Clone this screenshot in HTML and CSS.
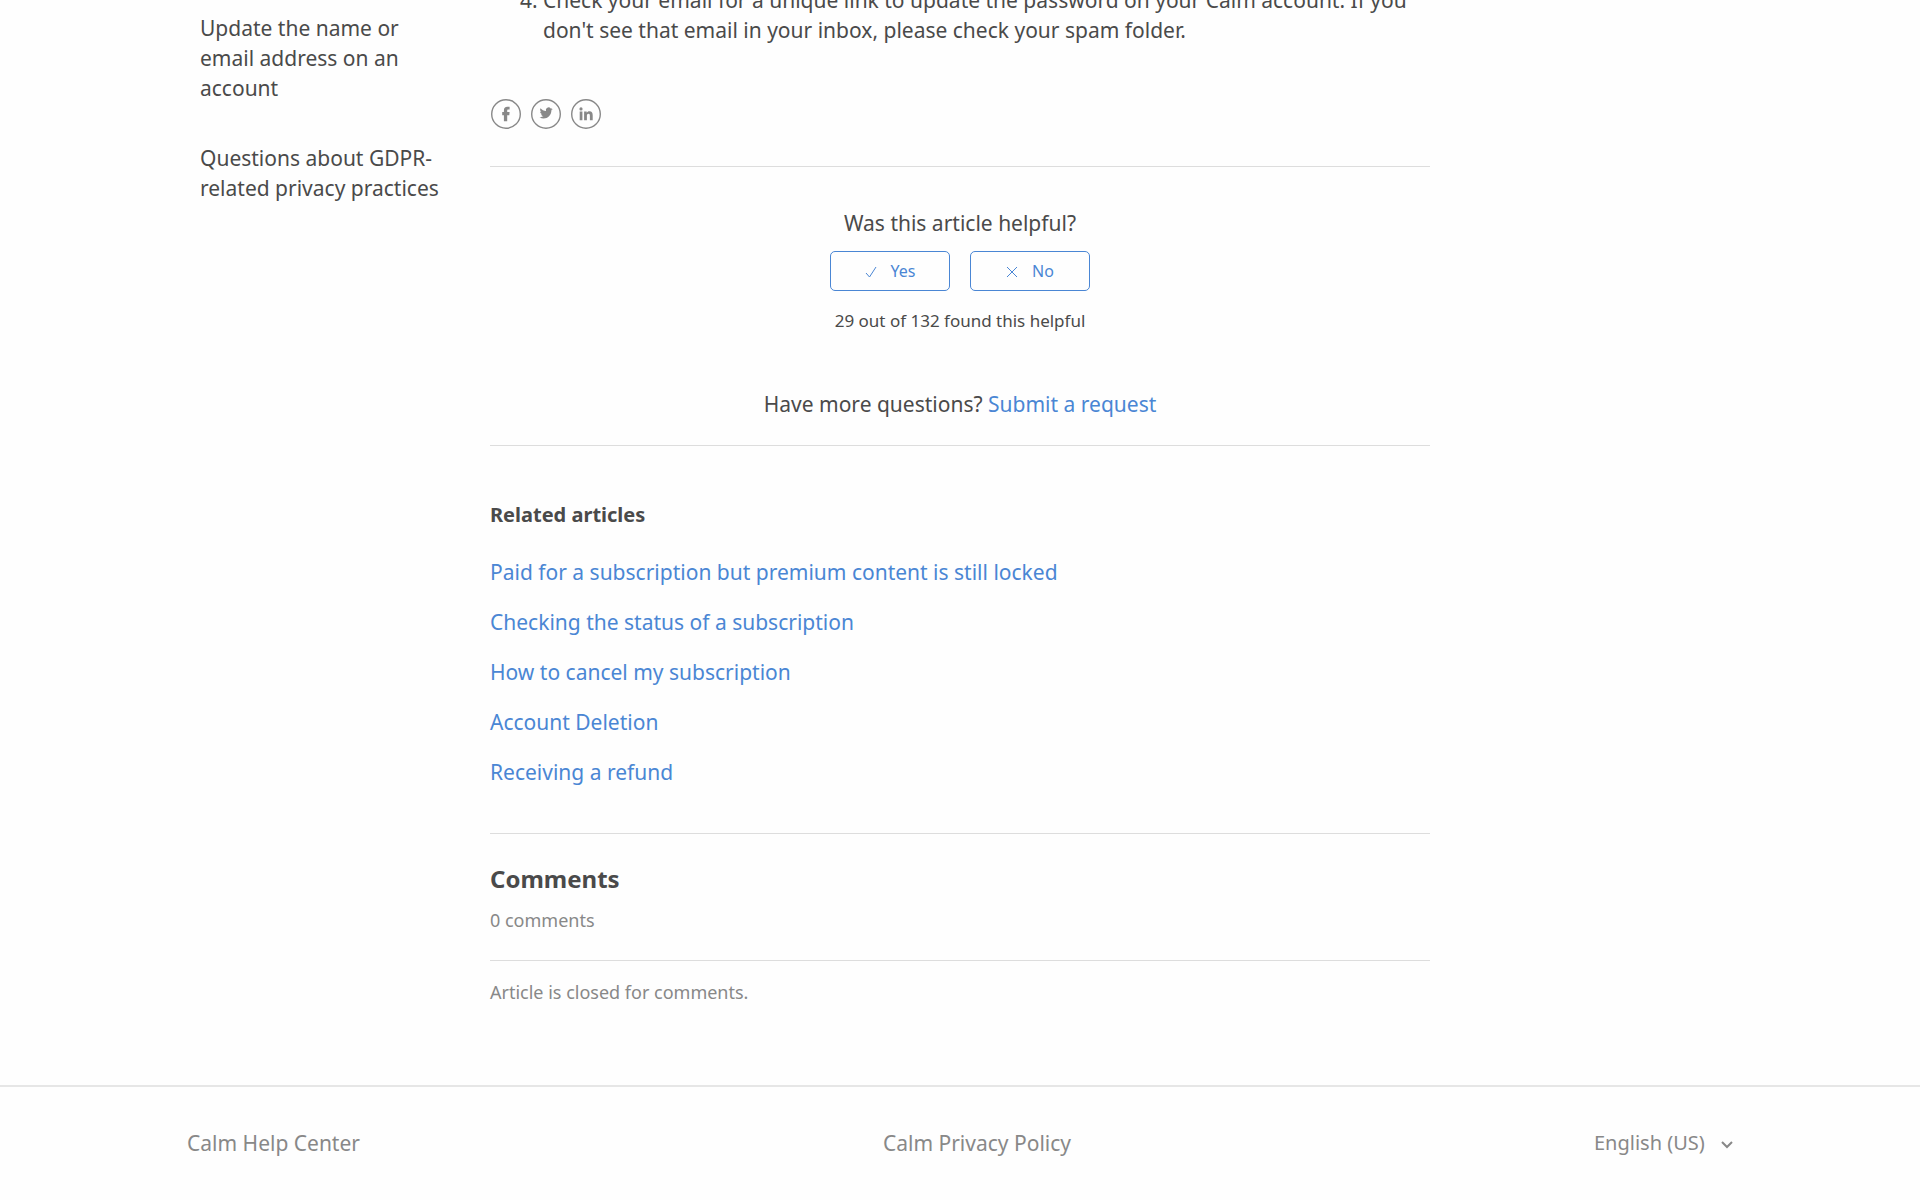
FILE: index.html
```html
<!DOCTYPE html>
<html lang="en-US">
<head>
    <meta charset="UTF-8">
    <meta name="viewport" content="width=device-width, initial-scale=1.0">
    <title>Calm Help Center</title>
    <link rel="stylesheet" href="styles.css">
</head>
<body>
    <main class="container article-container">
        <!-- Articles in this section -->
        <nav class="article-sidebar" aria-label="Articles in this section">
            <a href="#">Update the name or email address on an account</a>
            <a href="#">Questions about GDPR-related privacy practices</a>
        </nav>

        <article class="article">
            <ol class="article-body" start="4">
                <li>Check your email for a unique link to update the password on your Calm account. If you don't see that email in your inbox, please check your spam folder.</li>
            </ol>

            <!-- Share links -->
            <div class="share">
                <a href="#" aria-label="Facebook">
                    <svg viewBox="0 0 30 30"><circle cx="15" cy="15" r="14.300"/><path d="M12.900 22.300V16.200H11.200V13.100h1.700v-1.700c0-2.300 1.100-3.600 3.500-3.600h2.200v2.800h-1.300c-.9 0-1.100.4-1.100 1.100v1.400h2.400l-.3 3.100h-2.100v6.100z"/></svg>
                </a>
                <a href="#" aria-label="Twitter">
                    <svg viewBox="0 0 30 30"><circle cx="15" cy="15" r="14.300"/><path d="M21.700 9.900c-.5.200-1 .4-1.500.4.500-.3.900-.8 1.100-1.400-.5.300-1 .5-1.600.6a2.700 2.700 0 0 0-4.700 2.500c-2.200-.1-4.200-1.200-5.500-2.800-.7 1.200-.4 2.800.8 3.600-.4 0-.8-.1-1.200-.3 0 1.300.9 2.400 2.100 2.700-.4.100-.8.100-1.200 0 .3 1.100 1.300 1.900 2.500 1.900a5.500 5.500 0 0 1-4 1.100c5.100 3.200 11.900-.1 11.900-7 .5-.4 1-.8 1.300-1.300z"/></svg>
                </a>
                <a href="#" aria-label="LinkedIn">
                    <svg viewBox="0 0 30 30"><circle cx="15" cy="15" r="14.300"/><path d="M8.700 12.600h2.700v8.700H8.700zM10 8.300a1.600 1.600 0 1 1 0 3.200 1.600 1.600 0 0 1 0-3.200zM13.100 12.600h2.600v1.200c.5-.9 1.400-1.500 2.700-1.500 2.700 0 3.300 1.800 3.300 4.200v4.800h-2.800v-4.300c0-1 0-2.300-1.400-2.300s-1.600 1.100-1.600 2.300v4.300h-2.800z"/></svg>
                </a>
            </div>

            <!-- Voting -->
            <section class="article-votes">
                <p>Was this article helpful?</p>
                <div class="vote-buttons">
                    <button type="button" class="vote-btn">
                        <svg viewBox="0 0 12 12"><path d="M1 7l3.500 4L11 1"/></svg>
                        Yes
                    </button>
                    <button type="button" class="vote-btn">
                        <svg viewBox="0 0 12 12"><path d="M1 1l10 10M11 1L1 11"/></svg>
                        No
                    </button>
                </div>
                <p class="vote-count">29 out of 132 found this helpful</p>
                <p class="more-questions">Have more questions? <a href="#">Submit a request</a></p>
            </section>

            <section class="related-articles">
                <h3>Related articles</h3>
                <ul>
                    <li><a href="#">Paid for a subscription but premium content is still locked</a></li>
                    <li><a href="#">Checking the status of a subscription</a></li>
                    <li><a href="#">How to cancel my subscription</a></li>
                    <li><a href="#">Account Deletion</a></li>
                    <li><a href="#">Receiving a refund</a></li>
                </ul>
            </section>

            <section class="comments">
                <h2>Comments</h2>
                <p class="comments-count">0 comments</p>
                <p class="comments-closed">Article is closed for comments.</p>
            </section>
        </article>
    </main>

    <footer class="footer">
        <div class="container footer-inner">
            <a href="#">Calm Help Center</a>
            <a href="#">Calm Privacy Policy</a>
            <div class="language">
                <select aria-label="Language">
                    <option>English (US)</option>
                </select>
                <svg viewBox="0 0 12 8"><path d="M1 1l5 5 5-5"/></svg>
            </div>
        </div>
    </footer>
</body>
</html>
```
FILE: styles.css
```css
* {
    margin: 0;
    padding: 0;
    box-sizing: border-box;
}

body {
    background-color: #fefefe;
    color: #4a4a4a;
    font-family: 'Noto Sans', sans-serif;
    font-size: 21px;
    line-height: 30px;
    overflow-x: hidden;
}

a {
    color: #4a86d4;
    text-decoration: none;
}

a:hover {
    text-decoration: underline;
}

ul {
    list-style: none;
}

.container {
    max-width: 1546px;
    margin: 0 auto;
}

.article-container {
    display: flex;
}

/* Sidebar */
.article-sidebar {
    flex: 0 0 303px;
    display: flex;
    flex-direction: column;
    gap: 40px;
    padding: 13px 40px 0 13px;
}

.article-sidebar a {
    color: #4a4a4a;
}

/* Article */
.article {
    flex: 0 1 940px;
}

.article-body {
    margin-top: -15px;
    padding: 0 10px 54px 53px;
}

.share {
    display: flex;
    gap: 10px;
    padding: 0 1px 37px;
    border-bottom: 1px solid #ddd;
}

.share svg {
    display: block;
    width: 30px;
    height: 30px;
    fill: #888;
}

.share circle {
    fill: none;
    stroke: #888;
    stroke-width: 1.4;
}

.article-votes {
    padding: 41px 0 26px;
    border-bottom: 1px solid #ddd;
    text-align: center;
}

.vote-buttons {
    display: flex;
    justify-content: center;
    gap: 20px;
    padding: 13px 0 15px;
}

.vote-btn {
    display: flex;
    align-items: center;
    justify-content: center;
    gap: 14px;
    width: 120px;
    height: 40px;
    background: none;
    border: 1px solid #4a86d4;
    border-radius: 5px;
    color: #4a86d4;
    font-family: inherit;
    font-size: 16px;
    cursor: pointer;
}

.vote-btn svg {
    width: 12px;
    height: 12px;
    margin-top: 2px;
    fill: none;
    stroke: #4a86d4;
}

.vote-count {
    font-size: 17px;
}

.more-questions {
    padding-top: 53px;
}

/* Related articles */
.related-articles {
    padding: 54px 0 46px;
    border-bottom: 1px solid #ddd;
}

.related-articles h3 {
    margin-bottom: 27px;
    font-size: 20px;
}

.related-articles li {
    margin-bottom: 20px;
}

.related-articles li:last-child {
    margin-bottom: 0;
}

/* Comments */
.comments {
    padding: 30px 0 78px;
    color: #888;
    font-size: 18px;
}

.comments h2 {
    margin-bottom: 11px;
    color: #4a4a4a;
    font-size: 24px;
}

.comments-count {
    padding-bottom: 25px;
    border-bottom: 1px solid #ddd;
}

.comments-closed {
    padding-top: 16px;
}

/* Footer */
.footer {
    border-top: 2px solid #e6e6e6;
}

.footer-inner {
    display: flex;
    justify-content: space-between;
    padding: 41px 0;
}

.footer a {
    color: #888;
}

.language {
    position: relative;
}

.language select {
    appearance: none;
    display: block;
    padding-right: 28px;
    background: none;
    border: none;
    color: #888;
    font-family: inherit;
    font-size: 20px;
    line-height: 30px;
    cursor: pointer;
}

.language svg {
    position: absolute;
    top: 13px;
    right: 0;
    width: 12px;
    height: 8px;
    fill: none;
    stroke: #888;
    stroke-width: 2;
    pointer-events: none;
}
```
